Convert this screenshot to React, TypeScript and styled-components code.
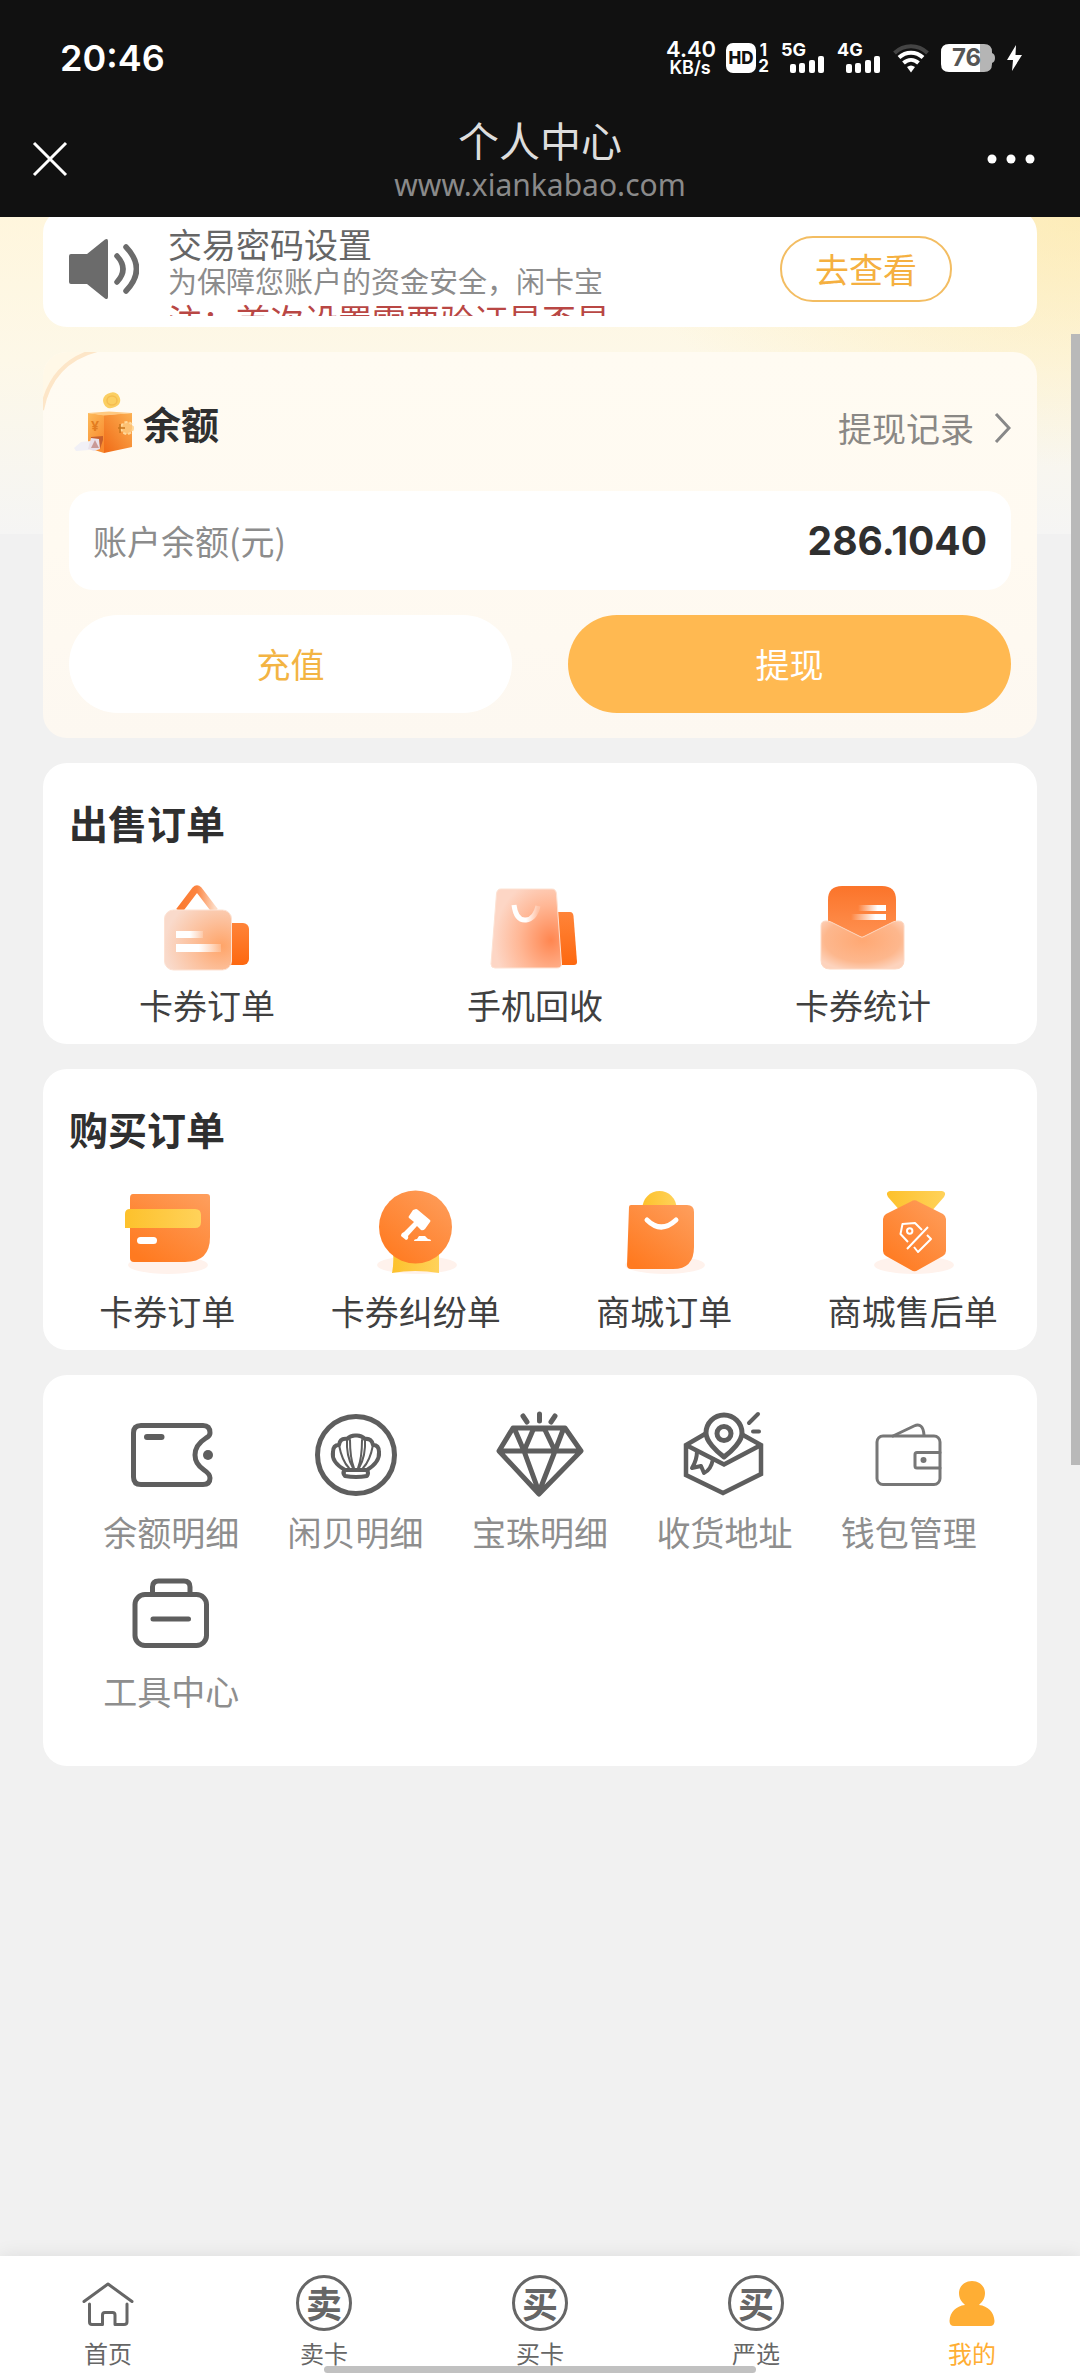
import React from "react";
import styled, { createGlobalStyle } from "styled-components";

const Global = createGlobalStyle`
  *, *::before, *::after { box-sizing: border-box; }
  body {
    margin: 0;
    background: #f1f1f1;
    font-family: "Noto Sans", "Noto Sans CJK SC", sans-serif;
  }
  button { font-family: inherit; background: none; border: 0; padding: 0; margin: 0; cursor: pointer; }
  a { color: inherit; text-decoration: none; }
  h1, h2, p { margin: 0; }
  svg { display: block; flex: none; }
`;

const cjk = `"Noto Sans CJK SC", "Noto Sans", sans-serif`;
const digits = `Inter, "Noto Sans", sans-serif`;

const Screen = styled.div`
  display: flex;
  flex-direction: column;
  min-height: 100vh;
  font-family: ${cjk};
`;

/* ---------- top area ---------- */

const Top = styled.header`
  background: #111;
  color: #fff;
`;

const StatusBar = styled.div`
  display: flex;
  align-items: center;
  justify-content: space-between;
  height: 116px;
  padding: 0 58px 0 60px;
  font-family: ${digits};
`;

const Clock = styled.time`
  font-size: 36px;
  font-weight: 600;
`;

const StatusIcons = styled.div`
  display: flex;
  align-items: center;
  gap: 12px;
`;

const Speed = styled.div`
  width: 48px;
  font-size: 22px;
  font-weight: 600;
  line-height: 20px;
  text-align: center;
  white-space: nowrap;
  small { display: block; font-size: 18px; line-height: 18px; }
`;

const Hd = styled.div`
  display: flex;
  align-items: center;
  gap: 2px;
`;

const HdBox = styled.span`
  width: 30px;
  border-radius: 7px;
  background: #fff;
  color: #111;
  font-size: 17px;
  font-weight: 800;
  line-height: 30px;
  text-align: center;
`;

const HdSims = styled.span`
  display: grid;
  width: 11px;
  font-size: 17px;
  font-weight: 700;
  line-height: 16px;
  text-align: center;
`;

const SignalBox = styled.div`
  width: 44px;
  font-size: 18px;
  font-weight: 700;
  line-height: 14px;
  svg { margin: -1px 0 0 8px; }
`;

const Battery = styled.div`
  display: grid;
  align-items: center;
  width: 54px;
  height: 28px;
  > * { grid-area: 1 / 1; }
  span {
    width: 51px;
    color: #555;
    font-size: 24px;
    font-weight: 700;
    line-height: 28px;
    text-align: center;
  }
`;

const TitleBar = styled.div`
  display: grid;
  grid-template-columns: 136px 1fr 136px;
  padding-bottom: 10px;
`;

const BarButton = styled.button`
  display: flex;
  align-items: center;
  height: 86px;
  padding: 0 32px;
  color: #fff;
`;

const PageTitle = styled.div`
  text-align: center;
  h1 { color: #ddd; font-size: 41px; font-weight: 400; line-height: 46px; }
  p { color: #8a8a8a; font-family: "Noto Sans", sans-serif; font-size: 30px; line-height: 45px; }
`;

/* ---------- content ---------- */

const Main = styled.main`
  position: relative;
  flex: 1;
  display: flex;
  flex-direction: column;
  gap: 25px;
  overflow: hidden;
  padding: 0 43px 25px;
  background:
    radial-gradient(ellipse 460px 250px at 100% 0, rgba(252, 232, 170, 0.7), rgba(252, 232, 170, 0)) no-repeat,
    linear-gradient(#fff6dd, #fdf8e8 45%, #f5f5f4) no-repeat 0 0 / 100% 317px,
    #f1f1f1;
`;

const ScrollThumb = styled.div`
  position: absolute;
  top: 117px;
  right: 0;
  width: 9px;
  height: 1131px;
  background: #b9b9b9;
`;

const Card = styled.section`
  border-radius: 24px;
  background: #fff;
`;

const Notice = styled(Card)`
  display: flex;
  align-items: center;
  margin-top: -8px;
  padding: 13px 85px 11px 26px;
`;

const NoticeText = styled.div`
  width: 444px;
  height: 94px;
  margin: 0 auto 0 29px;
  overflow: hidden;
  white-space: nowrap;
`;

const NoticeTitle = styled.h2`
  color: #666;
  font-size: 34px;
  font-weight: 400;
  line-height: 44px;
`;

const NoticeLine = styled.p`
  color: #8c8c8c;
  font-size: 29px;
  line-height: 29px;
`;

const NoticeWarn = styled.p`
  color: #b94744;
  font-size: 34px;
  line-height: 50px;
`;

const OutlineButton = styled.button`
  width: 172px;
  height: 66px;
  border: 2px solid #f3bd62;
  border-radius: 33px;
  color: #f5b040;
  font-size: 34px;
  line-height: 60px;
`;

const BalanceCard = styled(Card)`
  position: relative;
  overflow: hidden;
  padding: 22px 26px 25px;
  background: linear-gradient(#fffbf2, #fffaf1 50%, #fdf8f1);
`;

const Corner = styled.svg`
  position: absolute;
  top: 0;
  left: 0;
`;

const BalanceHead = styled.div`
  display: flex;
  align-items: center;
  justify-content: space-between;
  height: 104px;
  margin-bottom: 13px;
`;

const BalanceName = styled.h2`
  display: flex;
  align-items: center;
  gap: 4px;
  color: #2f2f2f;
  font-size: 38px;
  line-height: 50px;
  span { padding-bottom: 6px; }
`;

const RecordLink = styled.a`
  display: flex;
  align-items: center;
  gap: 20px;
  padding-top: 4px;
  color: #8a8885;
  font-size: 34px;
  line-height: 50px;
`;

const AmountBox = styled.div`
  display: flex;
  align-items: center;
  justify-content: space-between;
  height: 99px;
  padding: 0 24px;
  border-radius: 24px;
  background: #fff;
  color: #8c8c8c;
  font-size: 34px;
  strong { color: #2f2f2f; font-family: ${digits}; font-size: 39px; }
`;

const Actions = styled.div`
  display: grid;
  grid-template-columns: 1fr 1fr;
  gap: 56px;
  margin-top: 25px;
`;

const PillButton = styled.button<{ $solid?: boolean }>`
  height: 98px;
  padding-bottom: 2px;
  border-radius: 49px;
  background: ${(p) => (p.$solid ? "#ffb951" : "#fff")};
  color: ${(p) => (p.$solid ? "#fff" : "#f3b443")};
  font-size: 34px;
`;

const OrderCard = styled(Card)`
  padding: 34px 0 14px;
`;

const CardTitle = styled.h2`
  margin: 0 26px 36px;
  color: #2f2f2f;
  font-size: 39px;
  line-height: 50px;
`;

const Tiles = styled.div<{ $cols: number; $inset?: number }>`
  display: grid;
  grid-template-columns: repeat(${(p) => p.$cols}, 1fr);
  row-gap: 12px;
  padding-right: ${(p) => p.$inset ?? 0}px;
`;

const Tile = styled.a<{ $muted?: boolean }>`
  display: flex;
  flex-direction: column;
  align-items: center;
  gap: 7px;
  color: ${(p) => (p.$muted ? "#8e8e8e" : "#404040")};
  font-size: 34px;
  line-height: 50px;
  white-space: nowrap;
`;

const ToolCard = styled(Card)`
  padding: 35px 36px 50px;
`;

/* ---------- bottom navigation ---------- */

const BottomNav = styled.nav`
  position: sticky;
  bottom: 0;
  display: grid;
  grid-template-columns: repeat(5, 1fr);
  padding: 17px 0 7px;
  background: #fff;
  box-shadow: 0 0 18px rgba(0, 0, 0, 0.09);
`;

const NavItem = styled.a<{ $active?: boolean }>`
  display: flex;
  flex-direction: column;
  align-items: center;
  gap: 4px;
  color: ${(p) => (p.$active ? "#ffae34" : "#666")};
  font-size: 24px;
  line-height: 32px;
`;

const RoundGlyph = styled.span`
  width: 56px;
  height: 56px;
  margin: 2px 0;
  border: 3px solid currentColor;
  border-radius: 50%;
  font-size: 36px;
  font-weight: 700;
  line-height: 49px;
  text-align: center;
`;

const GestureBar = styled.div`
  position: absolute;
  bottom: 3px;
  left: 30%;
  width: 40%;
  height: 7px;
  border-radius: 4px;
  background: #c1c1c1;
`;

/* ---------- status icons ---------- */

const Signal = ({ label }: { label: string }) => (
  <SignalBox>
    {label}
    <svg width="36" height="17" viewBox="0 0 36 17" fill="#fff">
      <rect x="1" y="8" width="6" height="9" rx="2" />
      <rect x="10" y="7" width="6" height="10" rx="2" />
      <rect x="20" y="4" width="6" height="13" rx="2" />
      <rect x="29" y="0" width="6" height="17" rx="2" />
    </svg>
  </SignalBox>
);

const Wifi = () => (
  <svg width="36" height="30" viewBox="0 0 36 30" fill="none" strokeWidth="4">
    <path d="M1.5 10C11 1 25 1 34.500 10" stroke="#444" />
    <path d="M6 14.500C13 8 23 8 30 14.500" stroke="#fff" />
    <path d="M10.500 20C15 16 21 16 25.500 20" stroke="#fff" />
    <path d="M14 24Q18 21 22 24L18 29.500Z" fill="#fff" />
  </svg>
);

/* ---------- page icons ---------- */

const Speaker = () => (
  <svg width="70" height="62" viewBox="0 0 70 62">
    <path d="M2 16H18L36 1.500Q39 0 39 3V59Q39 62 36 60.500L18 46H2Q0 46 0 44V18Q0 16 2 16Z" fill="#6b6b6b" />
    <path d="M48 18Q60 31 48 44M57 9Q78 31 57 53" fill="none" stroke="#6b6b6b" strokeWidth="5.500" strokeLinecap="round" />
  </svg>
);

const Safe = () => (
  <svg width="70" height="70" viewBox="0 0 70 70">
    <defs>
      <linearGradient id="safeL" x2="0.600" y2="1"><stop stopColor="#fdbb5b" /><stop offset="1" stopColor="#f88a2e" /></linearGradient>
      <linearGradient id="safeR" x1="1" x2="0" y2="1"><stop stopColor="#fcb052" /><stop offset="1" stopColor="#f06a16" /></linearGradient>
    </defs>
    <rect x="34" y="2" width="17" height="15" rx="7" fill="#fbcf63" transform="rotate(-20 42 9)" />
    <ellipse cx="43" cy="9.500" rx="5" ry="4.500" fill="none" stroke="#f5bd50" strokeWidth="1.500" />
    <path d="M19 22L35 24V62L19 57Z" fill="url(#safeL)" />
    <path d="M35 24L63 22V56L35 62Z" fill="url(#safeR)" />
    <path d="M19 22L40 20.500L63 22L35 24.500Z" fill="#ffc980" />
    <text x="22" y="40" fontSize="14" fill="#e27c20" fontFamily="Noto Sans, sans-serif">¥</text>
    <path d="M22 46L34 45V49L31 58L28 56V49H22Z" fill="#c8602c" />
    <circle cx="58" cy="37" r="6" fill="#fdc173" stroke="#ffd89a" strokeWidth="2" strokeDasharray="3 2" />
    <path d="M51 33V42M49 37H56" stroke="#c9741c" strokeWidth="1.500" />
    <path d="M5 57L12 51L22 50L20 59L7 60Z" fill="#f1f0f6" />
    <path d="M19 58L22 47L30 48L31 58L25 60Z" fill="#e9e1ea" />
    <path d="M22 57L26 49L30 57Z" fill="#c99a97" />
  </svg>
);

const Icon = ({ children }: { children: React.ReactNode }) => (
  <svg width="90" height="90" viewBox="0 0 90 90" fill="none">{children}</svg>
);

const Line = ({ children, w = 5 }: { children: React.ReactNode; w?: number }) => (
  <svg width="90" height="90" viewBox="0 0 90 90" fill="none" stroke="#5e5e5e" strokeWidth={w} strokeLinecap="round" strokeLinejoin="round">{children}</svg>
);

const Gradients = () => (
  <defs>
    <linearGradient id="deep" x2="0" y2="1"><stop stopColor="#ff8439" /><stop offset="1" stopColor="#fd6810" /></linearGradient>
    <linearGradient id="flap" x2="0" y2="1"><stop stopColor="#fb742a" /><stop offset="1" stopColor="#ff9455" /></linearGradient>
    <linearGradient id="warm" x1="1" x2="0.200" y2="1"><stop stopColor="#fe9f5e" /><stop offset="1" stopColor="#ff7a20" /></linearGradient>
    <linearGradient id="gold" x2="1"><stop stopColor="#fdc12c" /><stop offset="1" stopColor="#ffd25a" /></linearGradient>
    <radialGradient id="paper" cx="0.850" cy="0.600" r="0.850"><stop stopColor="#ffa468" /><stop offset="0.500" stopColor="#fcc09c" /><stop offset="1" stopColor="#f9dacb" /></radialGradient>
    <radialGradient id="bag" cx="0.850" cy="0.650" r="0.800"><stop stopColor="#ff8650" /><stop offset="0.550" stopColor="#ffb694" /><stop offset="1" stopColor="#fdd6c5" /></radialGradient>
    <linearGradient id="fadeR"><stop stopColor="#fff" /><stop offset="0.500" stopColor="#fff" /><stop offset="1" stopColor="#fff" stopOpacity="0.200" /></linearGradient>
    <linearGradient id="fadeL"><stop stopColor="#fff" stopOpacity="0" /><stop offset="0.700" stopColor="#fff" /></linearGradient>
    <linearGradient id="hook"><stop stopColor="#fb7a30" /><stop offset="0.500" stopColor="#fc8440" /><stop offset="1" stopColor="#fddcc6" /></linearGradient>
    <radialGradient id="env" cx="0.500" cy="0.400" r="0.650"><stop stopColor="#ffa873" /><stop offset="0.700" stopColor="#fdb78d" /><stop offset="1" stopColor="#fdd3bd" /></radialGradient>
  </defs>
);

const SellCard = () => (
  <Icon>
    <Gradients />
    <rect x="60" y="40" width="27" height="42" rx="6" fill="url(#deep)" />
    <path d="M17 28L33 7Q35 5 37 7L53 28" stroke="url(#hook)" strokeWidth="7" />
    <rect x="2.500" y="27" width="67" height="60" rx="9" fill="url(#paper)" stroke="#fde2d3" />
    <rect x="14" y="48" width="27" height="7" fill="url(#fadeR)" />
    <rect x="14" y="61" width="45" height="8" fill="url(#fadeR)" />
  </Icon>
);

const SellPhone = () => (
  <Icon>
    <path d="M66 29H80Q83 29 83.500 33L87 79Q87 82 84 82H66Z" fill="url(#deep)" />
    <path d="M11 6H62Q66 6 66.500 11L71.500 81Q71.500 85 67 85H5Q1 85 1 81L6.500 11Q7 6 11 6Z" fill="url(#bag)" stroke="#fde2d3" />
    <path d="M24 22Q26 38 36 37Q45 36 48 23" stroke="url(#fadeR)" strokeWidth="5" />
  </Icon>
);

const SellStats = () => (
  <Icon>
    <path d="M24 3H64Q78 3 78 17V60H10V17Q10 3 24 3Z" fill="url(#flap)" />
    <rect x="40" y="22" width="28" height="6" fill="url(#fadeL)" />
    <rect x="33" y="31" width="35" height="6" fill="url(#fadeL)" />
    <path d="M8 38Q11 38 13 39L42 53.500Q44 55 46 53.500L75 39Q77 38 80 38Q86 38 86 43V77Q86 86 77 86H12Q3 86 3 77V43Q3 38 8 38Z" fill="url(#env)" stroke="#fdd9c4" />
  </Icon>
);

const Shade = () => <ellipse cx="46" cy="76" rx="40" ry="9" fill="#fff2ec" />;

const BuyCard = () => (
  <Icon>
    <Shade />
    <path d="M11 5H85Q88 5 88 8V48Q88 73 63 73H12Q8 73 8 69V9Q8 5 11 5Z" fill="url(#warm)" />
    <path d="M8 20H73Q79 20 79 26V33Q79 39 73 39H3V25Q3 20 8 20Z" fill="url(#gold)" />
    <rect x="15" y="48" width="20" height="7" rx="3.500" fill="#fff" />
  </Icon>
);

const BuyDispute = () => (
  <Icon>
    <Shade />
    <path d="M22 62H68V84Q44 80 21 84Q23 74 22 62Z" fill="url(#gold)" />
    <circle cx="44.500" cy="38" r="36.500" fill="url(#warm)" />
    <path d="M42 21L45 20Q46 20 47 21L59 31Q60 32 59 33L54 40Q52 42 50 41L46 37L37 47Q38 50 35 51L30 47Q30 44 33 43L43 33L38 29Q37 28 38 27Z" fill="#fff" />
    <path d="M43 52Q43 50 46 50L48 47H54L57 50Q60 50 60 52Z" fill="#fff" />
  </Icon>
);

const BuyMall = () => (
  <Icon>
    <Shade />
    <circle cx="40.500" cy="19" r="17" fill="url(#gold)" />
    <path d="M12 16H68Q75 16 75 23V58Q75 80 54 80H12Q8 80 8 76L10 18Q10 16 12 16Z" fill="url(#warm)" />
    <path d="M28 31Q42 45 57 31" stroke="#fff" strokeWidth="5" strokeLinecap="round" />
  </Icon>
);

const BuyAfter = () => (
  <Icon>
    <Shade />
    <path d="M22 2H74Q79 3 76 8L62 24H34L20 8Q17 3 22 2Z" fill="url(#gold)" />
    <path d="M43 12.500Q46.500 10 50 12.500L75 25Q78 27 78 30V62Q78 65 75 67L50 81Q46.500 83.500 43 81L18 67Q15 65 15 62V30Q15 27 18 25Z" fill="url(#warm)" />
    <g stroke="#fff" strokeWidth="2" strokeLinejoin="round">
      <path d="M40 53L32.500 45L34.500 35L47 34L54 41M60 38L39 60M59 46L63 50L50 63L46 58" />
      <circle cx="41.700" cy="42" r="2.700" />
    </g>
  </Icon>
);

const IconBalance = () => (
  <Line>
    <path d="M15 15.500H77Q84 15.500 84 23Q84 26 80 28Q69 35 69 45Q69 54 78 60Q84 64 84 68Q84 74.500 77 74.500H15Q7.500 74.500 7.500 67V23Q7.500 15.500 15 15.500Z" />
    <path d="M21 27H35.500" strokeWidth="6" />
    <circle cx="82" cy="45" r="5" fill="#5e5e5e" stroke="none" />
  </Line>
);

const IconShell = () => (
  <Line>
    <circle cx="45" cy="45" r="38.500" />
    <g strokeWidth="4">
      <path d="M34 60Q20 52 22 42Q22 35 28 35Q29 28 36 29Q40 25 45 25.500Q50 25 54 29Q61 28 62 35Q68 35 68 42Q69 52 56 60" />
      <path d="M34 60H56Q58 63 56 66Q45 68 34 66Q31 63 34 60Z" />
    </g>
    <path d="M28 35Q31 51 38 58M36 29Q35 46 42 58M39 30Q39 48 43 58M62 35Q59 51 52 58M54 29Q55 46 48 58M51 30Q51 48 47 58" strokeWidth="2" />
  </Line>
);

const IconDiamond = () => (
  <Line>
    <path d="M18 18H70L86 41L44 84L4 41ZM5 41H85M20 20L29 41L44 82L60 41L68 20M38 20L29 41M50 20L60 41" />
    <path d="M38 19H50M28 6L32 12M44.500 4V11M60 6L56 12" />
  </Line>
);

const IconAddress = () => (
  <Line>
    <path d="M45 47C37 41 27 31 27 23A18 18 0 0 1 63 23C63 31 53 41 45 47Z" />
    <circle cx="45" cy="23.500" r="7" />
    <path d="M26 24L7 35V65L44 83L82 64V35L64 25M7 35L45 54.500L82 35" strokeWidth="4.500" strokeLinejoin="miter" />
    <path d="M18 41Q18 50 13 58L22 56L25 63Q32 60 34 49M79 4L70 13M74 21.500H80" strokeWidth="4" />
  </Line>
);

const IconWallet = () => (
  <Line w={3}>
    <g stroke="#777">
      <rect x="13" y="26" width="63" height="48.500" rx="6" />
      <path d="M29 26L50 16Q59 12 60 25M76 42.500H53Q51 42.500 51 44.500V56Q51 58 53 58H76" />
      <circle cx="59.500" cy="50" r="1.500" />
    </g>
  </Line>
);

const IconToolbox = () => (
  <Line>
    <rect x="9" y="25.500" width="71.500" height="51" rx="10" />
    <path d="M26.500 25V18Q26.500 12 32.500 12H58Q64 12 64 18V25M27 50H62.500" />
  </Line>
);

const sell = [
  { name: "卡券订单", Art: SellCard },
  { name: "手机回收", Art: SellPhone },
  { name: "卡券统计", Art: SellStats },
];

const buy = [
  { name: "卡券订单", Art: BuyCard },
  { name: "卡券纠纷单", Art: BuyDispute },
  { name: "商城订单", Art: BuyMall },
  { name: "商城售后单", Art: BuyAfter },
];

const tools = [
  { name: "余额明细", Art: IconBalance },
  { name: "闲贝明细", Art: IconShell },
  { name: "宝珠明细", Art: IconDiamond },
  { name: "收货地址", Art: IconAddress },
  { name: "钱包管理", Art: IconWallet },
  { name: "工具中心", Art: IconToolbox },
];

export default function App() {
  return (
    <Screen>
      <Global />
      <Top>
        <StatusBar>
          <Clock>20:46</Clock>
          <StatusIcons>
            <Speed>4.40<small>KB/s</small></Speed>
            <Hd>
              <HdBox>HD</HdBox>
              <HdSims><span>1</span><span>2</span></HdSims>
            </Hd>
            <Signal label="5G" />
            <Signal label="4G" />
            <Wifi />
            <Battery>
              <svg width="54" height="28" viewBox="0 0 54 28">
                <path d="M8 0H43Q51 0 51 8V9Q54 10 54 14Q54 18 51 19V20Q51 28 43 28H8Z" fill="#b5b5b5" />
                <path d="M8 0H39V28H8Q0 28 0 20V8Q0 0 8 0Z" fill="#fff" />
              </svg>
              <span>76</span>
            </Battery>
            <svg width="15" height="26" viewBox="0 0 15 26"><path d="M9 0L0 15H6L5 26L15 10H8.500Z" fill="#fff" /></svg>
          </StatusIcons>
        </StatusBar>
        <TitleBar>
          <BarButton aria-label="关闭">
            <svg width="36" height="36" viewBox="0 0 36 36"><path d="M2 2L34 34M34 2L2 34" stroke="#fff" strokeWidth="3" /></svg>
          </BarButton>
          <PageTitle>
            <h1>个人中心</h1>
            <p>www.xiankabao.com</p>
          </PageTitle>
          <BarButton aria-label="更多">
            <svg width="72" height="10" viewBox="0 0 72 10" fill="#fff"><circle cx="16" cy="5" r="4.500" /><circle cx="35" cy="5" r="4.500" /><circle cx="54" cy="5" r="4.500" /></svg>
          </BarButton>
        </TitleBar>
      </Top>

      <Main>
        <Notice>
          <Speaker />
          <NoticeText>
            <NoticeTitle>交易密码设置</NoticeTitle>
            <NoticeLine>为保障您账户的资金安全，闲卡宝</NoticeLine>
            <NoticeWarn>注：首次设置需要验证是否是</NoticeWarn>
          </NoticeText>
          <OutlineButton>去查看</OutlineButton>
        </Notice>

        <BalanceCard>
          <Corner width="64" height="64" viewBox="0 0 64 64">
            <path d="M0 0H54Q10 8 0 56Z" fill="#fff8e7" />
            <path d="M-1 58Q8 10 54 -2" fill="none" stroke="#fde6c8" strokeWidth="4" />
          </Corner>
          <BalanceHead>
            <BalanceName><Safe /><span>余额</span></BalanceName>
            <RecordLink href="#records">
              提现记录
              <svg width="17" height="30" viewBox="0 0 17 30"><path d="M2 1L15 15L2 29" fill="none" stroke="#888" strokeWidth="3" /></svg>
            </RecordLink>
          </BalanceHead>
          <AmountBox>
            <span>账户余额(元)</span>
            <strong>286.1040</strong>
          </AmountBox>
          <Actions>
            <PillButton>充值</PillButton>
            <PillButton $solid>提现</PillButton>
          </Actions>
        </BalanceCard>

        <OrderCard>
          <CardTitle>出售订单</CardTitle>
          <Tiles $cols={3} $inset={10}>
            {sell.map(({ name, Art }) => <Tile key={name} href="#sell"><Art />{name}</Tile>)}
          </Tiles>
        </OrderCard>

        <OrderCard>
          <CardTitle>购买订单</CardTitle>
          <Tiles $cols={4}>
            {buy.map(({ name, Art }) => <Tile key={name} href="#buy"><Art />{name}</Tile>)}
          </Tiles>
        </OrderCard>

        <ToolCard>
          <Tiles $cols={5}>
            {tools.map(({ name, Art }) => <Tile key={name} href="#tools" $muted><Art />{name}</Tile>)}
          </Tiles>
        </ToolCard>
        <ScrollThumb />
      </Main>

      <BottomNav>
        <NavItem href="#home">
          <svg width="60" height="60" viewBox="0 0 60 60" fill="none" stroke="currentColor" strokeWidth="3" strokeLinecap="round" strokeLinejoin="round">
            <path d="M6 28.500L30 11L54 28.500M11.500 31V49Q11.500 51.500 14 51.500H24.500V42Q24.500 39.500 27 39.500H34.500Q37 39.500 37 42V51.500H46Q49 51.500 49 49V31" />
          </svg>
          首页
        </NavItem>
        <NavItem href="#sell-card"><RoundGlyph>卖</RoundGlyph>卖卡</NavItem>
        <NavItem href="#buy-card"><RoundGlyph>买</RoundGlyph>买卡</NavItem>
        <NavItem href="#select"><RoundGlyph>买</RoundGlyph>严选</NavItem>
        <NavItem href="#me" $active>
          <svg width="60" height="60" viewBox="0 0 60 60" fill="currentColor">
            <path d="M30 8C38 8 43 14 43 20C43 26 40 29 37 32C46 33 52 39 52.500 48Q52.500 53 48 53H12Q7.500 53 7.500 48C8 39 14 33 23 32C20 29 17 26 17 20C17 14 22 8 30 8Z" />
          </svg>
          我的
        </NavItem>
        <GestureBar />
      </BottomNav>
    </Screen>
  );
}
